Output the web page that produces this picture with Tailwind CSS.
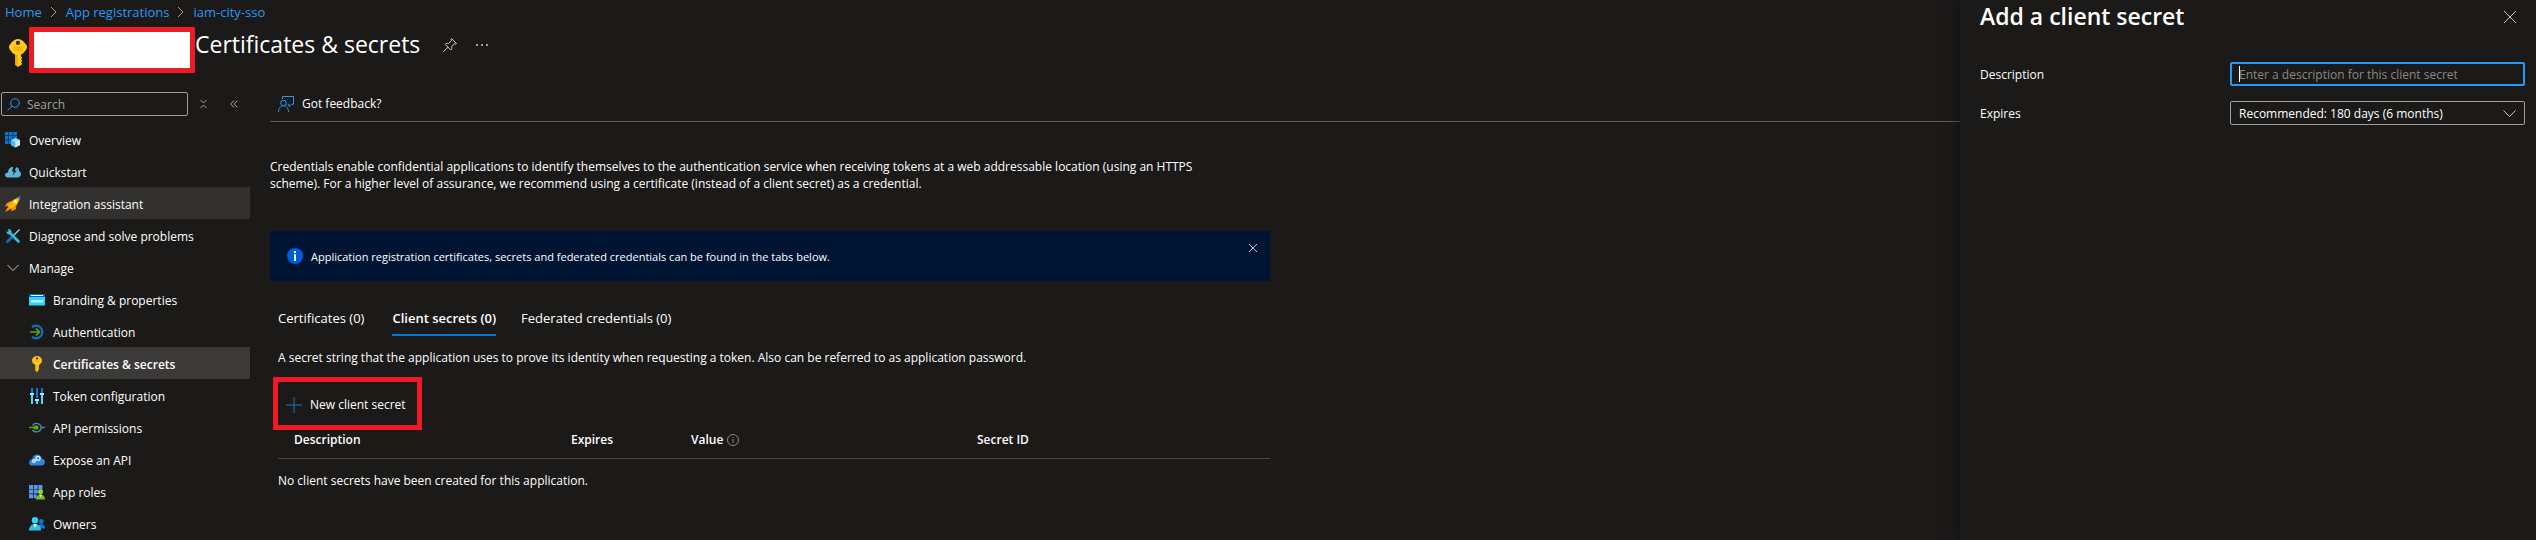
<!DOCTYPE html>
<html lang="en">
<head>
<meta charset="utf-8">
<meta name="viewport" content="width=device-width, initial-scale=1">
<title>Certificates &amp; secrets</title>
<script src="https://cdn.jsdelivr.net/npm/@tailwindcss/browser@4"></script>
</head>
<body class="flex min-h-screen overflow-hidden bg-[#1b1a19] font-['Open_Sans','Noto_Sans',sans-serif] text-[12px] leading-[17px] text-white">
<div class="min-w-0 flex-1">
  <nav aria-label="Breadcrumb" class="flex h-6 items-center gap-2 pl-[5px] text-[13px] text-[#2899f5]">
    <a href="#">Home</a>
    <svg class="h-3 w-2 text-[#a19f9d]" viewBox="0 0 8 12" fill="none" stroke="currentColor"><path d="M1 1l5 5-5 5"/></svg>
    <a href="#">App registrations</a>
    <svg class="h-3 w-2 text-[#a19f9d]" viewBox="0 0 8 12" fill="none" stroke="currentColor"><path d="M1 1l5 5-5 5"/></svg>
    <a href="#">iam-city-sso</a>
  </nav>
  <header class="flex h-[52px] items-start pt-[3px] pl-[9px]">
    <svg class="mt-3 h-7 w-[18px] shrink-0" viewBox="0 0 18 28"><path d="M9 0c2 0 4.200 1.200 5.800 2.800L17.400 6c.8 1.200.8 3 0 4.200L14.500 14 12 15.800v1.700l.9.800v1.200l-.9.900.9.900v1.200l-.9.900.9.900v1.200L10.300 27 9 28 6.300 26V15.800L3.500 14 .6 10.200C-.2 9-.2 7.200.6 6l2.600-3.200C4.800 1.200 7 0 9 0z" fill="#ffc919"/><path d="M6.300 15.800h2.200V27.600L6.300 26zM4.500 8.300h9v1.200h-9zM4.500 10.500h9v1h-9z" fill="#f5a300"/><circle cx="9" cy="3.900" r="2.100" fill="#3a2b06"/></svg>
    <div class="ml-0.5 h-[46px] w-[166px] shrink-0 border-[5px] border-[#ed1c24] bg-white"></div>
    <h1 class="mt-px text-[23px] leading-8">Certificates &amp; secrets</h1>
    <button aria-label="Pin" class="mt-[10px] ml-[22px]"><svg class="h-4 w-4" viewBox="0 0 16 16" fill="none" stroke="#d2d0ce"><path d="M9.500 1.500l5 5-1 .5-1-.2-2.800 2.800c.4 1.500.1 2.600-.9 3.400L3.200 7.400c.8-1 2-1.300 3.400-.9l2.800-2.800-.3-1.200zM6 10.200l-4.800 4.600"/></svg></button>
    <button aria-label="More" class="mt-[17px] ml-[18px]"><svg class="h-[2px] w-3" viewBox="0 0 12 2" fill="#a19f9d"><path d="M0 0h2v2H0zM5 0h2v2H5zM10 0h2v2h-2z"/></svg></button>
  </header>

  <div class="flex">
    <aside class="w-[250px] shrink-0">
      <div class="flex h-[47px] items-start pt-4 pl-px">
        <label class="flex h-6 w-[187px] items-center gap-[7px] rounded-[2px] border border-[#a19f9d] pl-[5px]">
          <svg class="h-[13px] w-[13px] shrink-0" viewBox="0 0 13 13" fill="none" stroke="#2899f5"><circle cx="8" cy="5" r="4.300"/><path d="M5 8.200L.5 12.500"/></svg>
          <input aria-label="Search" placeholder="Search" class="w-full min-w-0 bg-transparent outline-none placeholder:text-[#a19f9d]">
        </label>
        <button aria-label="Collapse all" class="mt-2 ml-3"><svg class="h-2 w-[7px]" viewBox="0 0 7 8" fill="none" stroke="#a19f9d"><path d="M.5 0l3 3 3-3M.5 8l3-3 3 3"/></svg></button>
        <button aria-label="Hide menu" class="mt-2 ml-[23px]"><svg class="h-2 w-2" viewBox="0 0 8 8" fill="none" stroke="#a19f9d"><path d="M4 .5L.7 4 4 7.500M7.500.5L4.200 4l3.300 3.500"/></svg></button>
      </div>
      <nav aria-label="Menu">
        <a href="#" class="flex h-8 items-center gap-2 pt-0.5 pl-[5px]">
          <svg class="h-4 w-4" viewBox="0 0 16 16"><path d="M0 0h12v12H0z" fill="#0078d4"/><path d="M3.500 0v12M8 0v12M0 3.500h12M0 8h12" stroke="#1b1a19" stroke-width=".6"/><path d="M10.500 6l4.500 2v5l-4.500 2.500L6 13V8z" fill="#9cdcf5"/><path d="M10.500 10.200V15.500L6 13V8z" fill="#50b8e8"/><path d="M10.500 10.200L15 8v5l-4.500 2.500z" fill="#c8effc"/></svg>Overview</a>
        <a href="#" class="flex h-8 items-center gap-2 pt-0.5 pl-[5px]">
          <svg class="h-4 w-4" viewBox="0 0 16 16"><path d="M3 13.500c-4 0-4-5 0-5 0-5 5-7 7-4.500 2-2 4.500.5 4 3 3 1 2.500 6.500-1 6.500z" fill="#59b4d9"/><path d="M8.500 2L7 7.500h2L7.500 12l4-5.500h-2L12 2z" fill="#1b1a19"/></svg>Quickstart</a>
        <a href="#" class="flex h-8 items-center gap-2 bg-[#323130] pt-0.5 pl-[5px]">
          <svg class="h-4 w-4" viewBox="0 0 16 16"><path d="M7 4.500L2 7 0 10.500l4-.5zM11.500 9L11 13l-4.500 2.500L6.500 12z" fill="#f78d1e"/><path d="M3.500 10L0 16l6-3z" fill="#ff9300"/><path d="M13 1.500L8 4 3 10l3 3 6-4.500 2.500-5z" fill="#ffb900"/><path d="M15.800 0l-3.800 1.500 2.500 2.500z" fill="#2f8fe0"/><circle cx="10.300" cy="5.700" r="1.600" fill="#fff4c2"/></svg>Integration assistant</a>
        <a href="#" class="flex h-8 items-center gap-2 pt-0.5 pl-[5px]">
          <svg class="h-4 w-4" viewBox="0 0 16 16" fill="none"><path d="M14.500 1.500L8 8" stroke="#9cdcf5" stroke-width="1.300"/><path d="M7.500 8.500L2.500 13.500" stroke="#0f6cbd" stroke-width="3" stroke-linecap="round"/><path d="M4 4l9.500 9.500" stroke="#32bedd" stroke-width="2.600" stroke-linecap="round"/><path d="M2.500 1.300L5 3.500 3.700 5 1.500 3C1 5.500 3 7 5 6.300L6.600 4.600C7 2.500 5 .5 2.500 1.300z" fill="#32bedd"/></svg>Diagnose and solve problems</a>
        <button aria-expanded="true" class="flex h-8 w-full items-center gap-2 pt-0.5 pl-[5px]">
          <svg class="h-4 w-4" viewBox="0 0 16 16" fill="none" stroke="#c8c6c4"><path d="M2.500 5L8 10.500 13.500 5"/></svg>Manage</button>
        <a href="#" class="flex h-8 items-center gap-2 pt-0.5 pl-[29px]">
          <svg class="h-4 w-4" viewBox="0 0 16 16"><path d="M0 2h16v3H0z" fill="#0067b8"/><path d="M2 3h12v1H2z" fill="#fff"/><path d="M0 5h16v8.500H0z" fill="#32d4f5"/><path d="M2 8l1 2.500L4 8l1 2.500L6 8l1 2.500L8 8l1 2.500L10 8l1 2.500L12 8l1 2.500L14 8" fill="none" stroke="#e8fbff" stroke-width=".8"/></svg>Branding &amp; properties</a>
        <a href="#" class="flex h-8 items-center gap-2 pt-0.5 pl-[29px]">
          <svg class="h-4 w-4" viewBox="0 0 16 16" fill="none"><path d="M3 3.200A6.300 6.300 0 1 1 3 12.800" stroke="#0f6fc5" stroke-width="2.200"/><path d="M1 8h9M7 4.500L10.500 8 7 11.500" stroke="#5ea60a" stroke-width="1.700"/></svg>Authentication</a>
        <a href="#" aria-current="page" class="flex h-8 items-center gap-2 bg-[#3b3a39] pt-0.5 pl-[29px] font-semibold">
          <svg class="h-4 w-4" viewBox="0 0 16 16"><path d="M8 0c3 0 5 2.300 5 4.700 0 1.800-1.400 3-2.800 4v1l-.7.800.7.800-.7.800.7.800-.7.800L8.300 16H7.600L6.300 14.500V8.700C4.500 7.700 3 6.500 3 4.700 3 2.300 5 0 8 0z" fill="#ffc61a"/><path d="M6.300 8.700h1.500V16l-1.500-1.500zM5 4.800h6v.8H5z" fill="#f59b00"/><circle cx="8" cy="2.400" r="1.100" fill="#3b3a39"/></svg>Certificates &amp; secrets</a>
        <a href="#" class="flex h-8 items-center gap-2 pt-0.5 pl-[29px]">
          <svg class="h-4 w-4" viewBox="0 0 16 16"><path d="M2 0h2v6H2zM7 0h2v10H7zM12 0h2v6h-2z" fill="#0f78d4"/><path d="M2 6h2v10H2zM7 12h2v4H7zM12 6h2v10h-2z" fill="#50d9f5"/><path d="M1 5h4v2H1zM6 11h4v2H6zM11 5h4v2h-4z" fill="#9cebff"/></svg>Token configuration</a>
        <a href="#" class="flex h-8 items-center gap-2 pt-0.5 pl-[29px]">
          <svg class="h-4 w-4" viewBox="0 0 16 16" fill="none"><path d="M3.500 5.500C5.500 2.300 12 2.800 12 7.500s-6 5.800-8.500 2.500M12 7.500h4" stroke="#3f8fb0" stroke-width="1.300"/><path d="M0 6.800h5v1.400H0z" fill="#5ea60a"/><rect x="4.500" y="5.500" width="5" height="4" rx="1.500" fill="#5ea60a"/></svg>API permissions</a>
        <a href="#" class="flex h-8 items-center gap-2 pt-0.5 pl-[29px]">
          <svg class="h-4 w-4" viewBox="0 0 16 16"><path d="M3.500 13.500C-1 13.500-1 7.500 3.300 7 4 1.200 12 1 12.800 6.500c4.300.5 4 7 0 7z" fill="#2f86e0"/><circle cx="9" cy="6.300" r="2" fill="none" stroke="#e6f2ff" stroke-width="1.300"/><circle cx="5" cy="9" r="1.400" fill="none" stroke="#e6f2ff" stroke-width="1.200"/></svg>Expose an API</a>
        <a href="#" class="flex h-8 items-center gap-2 pt-0.5 pl-[29px]">
          <svg class="h-4 w-4" viewBox="0 0 16 16"><path d="M0 1h4v4H0zM4.700 1h4v4h-4zM9.400 1h4v4h-4zM0 5.600h4v4H0zM4.700 5.600h4v4h-4zM0 10.200h4v4H0zM4.700 10.200h3v4h-3z" fill="#5b95ee"/><circle cx="11.500" cy="7.500" r="2.600" fill="#86d633"/><path d="M7 15.500c0-3 1.500-5 4.500-5s4.500 2 4.500 5z" fill="#76bc2d"/><path d="M10.300 10.500h2.400l-1.200 3z" fill="#fff"/></svg>App roles</a>
        <a href="#" class="flex h-8 items-center gap-2 pt-0.5 pl-[29px]">
          <svg class="h-4 w-4" viewBox="0 0 16 16"><circle cx="12.300" cy="5.500" r="2.400" fill="#0f78d4"/><path d="M9 12.500c0-3 1.500-4.500 3.500-4.500s3.500 1.500 3.500 4.500z" fill="#0f78d4"/><circle cx="6" cy="4.300" r="3.200" fill="#32d4f5"/><path d="M0 14.500c0-4 2.500-6.500 6-6.500s6 2.500 6 6.500z" fill="#32bedd"/><path d="M4.300 8h3.400L6 12z" fill="#d8f8ff"/></svg>Owners</a>
      </nav>
    </aside>

    <main class="min-w-0 flex-1 pl-5">
      <div class="flex h-[46px] items-start border-b border-[#605e5c] pt-[19px] pl-2">
        <button class="flex items-center gap-2">
          <svg class="h-4 w-4" viewBox="0 0 16 16" fill="none" stroke="#2899f5"><path d="M4.500 3V.5h11v7.800h-2L11 10.700V8.300H9.500"/><circle cx="5.500" cy="7" r="2.800"/><path d="M.5 16c0-3.500 2-6.200 5-6.200s5 2.700 5 6.200"/></svg>Got feedback?</button>
      </div>
      <div class="max-w-[1000px]">
        <p class="mt-9 max-w-[970px]">Credentials enable confidential applications to identify themselves to the authentication service when receiving tokens at a web addressable location (using an HTTPS scheme). For a higher level of assurance, we recommend using a certificate (instead of a client secret) as a credential.</p>
        <div role="status" class="mt-[39px] flex h-[50px] items-center gap-2 rounded-[2px] bg-[#001433] pr-[13px] pl-[17px] text-[11px]">
          <svg class="h-4 w-4" viewBox="0 0 16 16"><circle cx="8" cy="8" r="8" fill="#015cda"/><path d="M7 3h2v2H7zM7 6.200h2V13H7z" fill="#fff"/></svg>
          <span class="flex-1">Application registration certificates, secrets and federated credentials can be found in the tabs below.</span>
          <button aria-label="Dismiss" class="mt-[13px] self-start"><svg class="h-2 w-2" viewBox="0 0 8 8" stroke="#c8c6c4"><path d="M0 0l8 8M8 0L0 8"/></svg></button>
        </div>
        <div class="pl-2">
          <div role="tablist" class="mt-[26px] flex h-[29px] text-[13px]">
            <button role="tab" aria-selected="false" class="mr-7 flex pt-[3px]">Certificates (0)</button>
            <button role="tab" aria-selected="true" class="mr-[25px] flex border-b-2 border-[#0078d4] pt-[3px] font-semibold">Client secrets (0)</button>
            <button role="tab" aria-selected="false" class="flex pt-[3px]">Federated credentials (0)</button>
          </div>
          <p class="mt-[13px]">A secret string that the application uses to prove its identity when requesting a token. Also can be referred to as application password.</p>
          <div class="-ml-[5px] mt-[11px] flex h-[53px] w-[149px] items-center border-[5px] border-[#ed1c24] pt-0.5 pl-2">
            <button class="flex items-center gap-2 whitespace-nowrap">
              <svg class="h-4 w-4" viewBox="0 0 16 16" stroke="#2472b5"><path d="M8 0v16M0 8h16"/></svg>New client secret</button>
          </div>
          <table class="w-full table-fixed border-collapse text-left">
            <thead><tr class="h-7 border-b border-[#484644] align-top">
              <th class="w-[293px] pt-px pl-4 font-semibold">Description</th>
              <th class="w-[120px] pt-px font-semibold">Expires</th>
              <th class="w-[286px] pt-px font-semibold"><span class="flex items-center gap-1">Value
                <svg class="h-3 w-3" viewBox="0 0 12 12" fill="none" stroke="#8a8886"><circle cx="6" cy="6" r="5.500"/><path d="M6 3v1M6 5v4"/></svg></span></th>
              <th class="pt-px font-semibold">Secret ID</th>
            </tr></thead>
            <tbody><tr><td colspan="4" class="pt-[13px]">No client secrets have been created for this application.</td></tr></tbody>
          </table>
        </div>
      </div>
    </main>
  </div>
</div>

<section aria-labelledby="panel-title" class="w-[576px] shrink-0 bg-[#1b1a19] pr-[11px] pl-5 shadow-[0_0_12px_rgba(0,0,0,0.5)]">
  <div class="flex h-[62px] items-start justify-between pr-[9px]">
    <h2 id="panel-title" class="text-[23px] leading-8 font-semibold">Add a client secret</h2>
    <button aria-label="Close" class="mt-[11px]"><svg class="h-3 w-3" viewBox="0 0 12 12" stroke="#c8c6c4"><path d="M0 0l12 12M12 0L0 12"/></svg></button>
  </div>
  <form>
    <div class="flex items-center">
      <label for="desc" class="w-[250px]">Description</label>
      <div class="relative flex-1">
        <input id="desc" placeholder="Enter a description for this client secret" class="block h-6 w-full rounded-[2px] border-2 border-[#2899f5] bg-transparent pl-[7px] outline-none placeholder:text-[#8a8886]">
        <span class="absolute top-1 left-[9px] h-4 w-px bg-white"></span>
      </div>
    </div>
    <div class="mt-[15px] flex items-center">
      <label for="exp" class="w-[250px]">Expires</label>
      <div class="relative flex-1">
        <select id="exp" class="block h-6 w-full appearance-none rounded-[2px] border border-[#a19f9d] bg-[#1b1a19] pl-2 outline-none"><option>Recommended: 180 days (6 months)</option></select>
        <svg class="pointer-events-none absolute top-[9px] right-[9px] h-[7px] w-[13px]" viewBox="0 0 13 7" fill="none" stroke="#c8c6c4"><path d="M.5.5l6 6 6-6"/></svg>
      </div>
    </div>
  </form>
</section>
</body>
</html>
